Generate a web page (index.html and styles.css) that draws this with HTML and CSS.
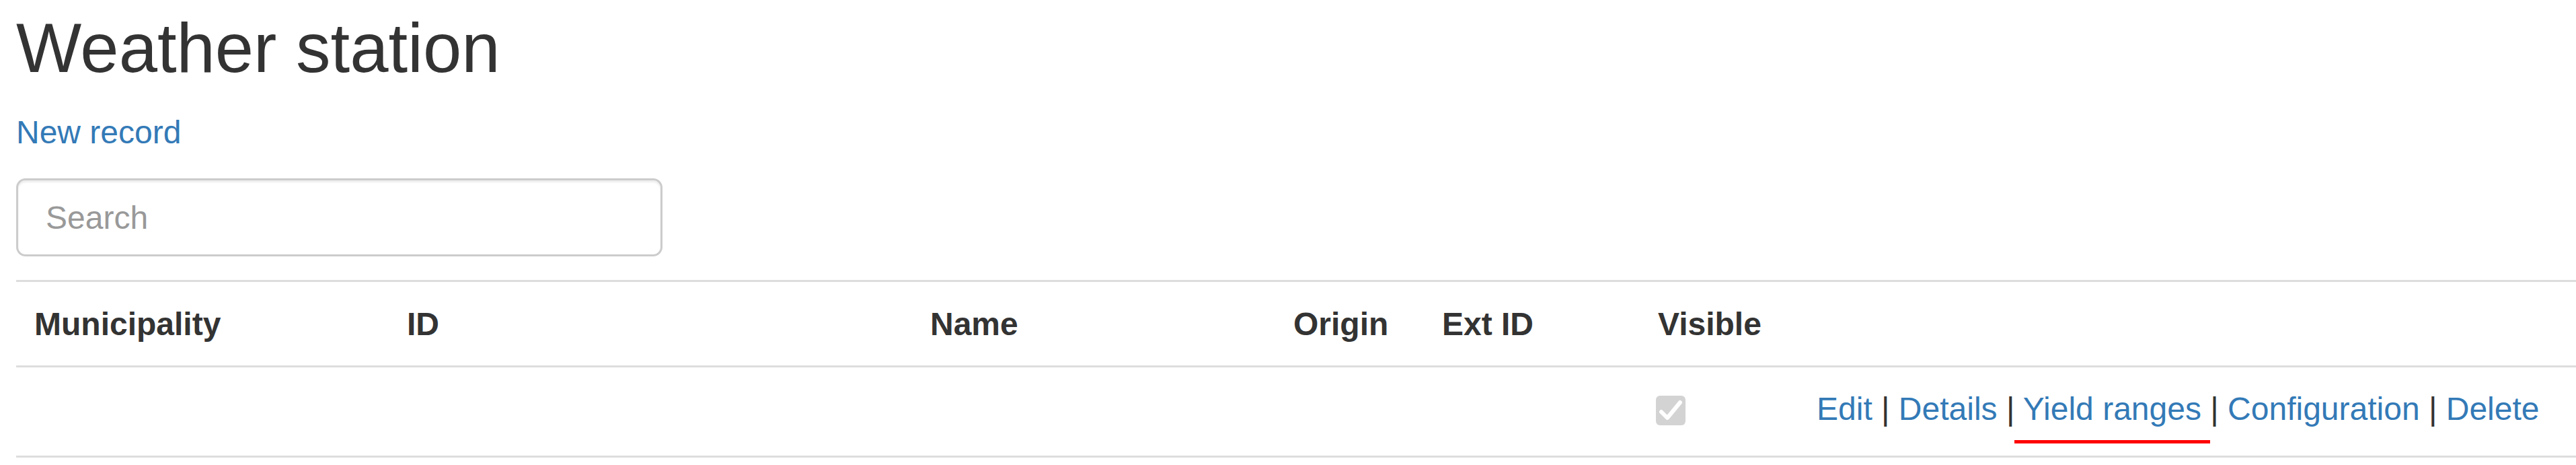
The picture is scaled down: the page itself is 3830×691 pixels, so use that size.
FILE: index.html
```html
<!DOCTYPE html>
<html lang="en">
<head>
<meta charset="utf-8">
<title>Weather station</title>
<link rel="stylesheet" href="styles.css">
</head>
<body>
<main class="page">
  <h1 class="title">Weather station</h1>
  <p class="actions"><a href="#" class="link">New record</a></p>
  <div class="search-group">
    <input class="search" type="text" placeholder="Search">
  </div>
  <table class="grid">
    <colgroup>
      <col class="c-mun">
      <col class="c-id">
      <col class="c-name">
      <col class="c-origin">
      <col class="c-ext">
      <col class="c-vis">
      <col class="c-act">
    </colgroup>
    <thead>
      <tr>
        <th>Municipality</th>
        <th>ID</th>
        <th>Name</th>
        <th>Origin</th>
        <th>Ext ID</th>
        <th>Visible</th>
        <th></th>
      </tr>
    </thead>
    <tbody>
      <tr>
        <td></td>
        <td></td>
        <td></td>
        <td></td>
        <td></td>
        <td>
          <span class="check" role="checkbox" aria-checked="true" aria-disabled="true">
            <svg viewBox="0 0 44 44" width="44" height="44"><polyline points="8,24 17,33 36,10" fill="none" stroke="#fff" stroke-width="6" stroke-linecap="round" stroke-linejoin="round"/></svg>
          </span>
        </td>
        <td class="links"><a href="#" class="link">Edit</a> | <a href="#" class="link">Details</a> |<span class="marked"> <a href="#" class="link">Yield ranges</a> </span>| <a href="#" class="link">Configuration</a> | <a href="#" class="link">Delete</a></td>
      </tr>
    </tbody>
  </table>
</main>
</body>
</html>
```

FILE: styles.css
```css
html, body {
  margin: 0;
  padding: 0;
  background: #fff;
}

body {
  font-family: "Liberation Sans", Arial, sans-serif;
  font-size: 48px;
  line-height: 69px;
  color: #333;
}

.page {
  padding: 15px 0 0 24px;
}

.title {
  margin: 0 0 34px;
  font-size: 103px;
  line-height: 113px;
  font-weight: 400;
  color: #333;
}

.actions {
  margin: 0 0 34px;
}

.link {
  color: #337ab7;
  text-decoration: none;
}

.search-group {
  margin-bottom: 35px;
}

.search {
  display: block;
  box-sizing: border-box;
  width: 961px;
  height: 116px;
  margin: 0;
  padding: 0 41px;
  border: 3px solid #ccc;
  border-radius: 14px;
  box-shadow: inset 0 3px 3px rgba(0, 0, 0, 0.075);
  font-family: "Liberation Sans", Arial, sans-serif;
  font-size: 48px;
  color: #555;
  background: #fff;
  outline: none;
}

.search::placeholder {
  color: #999;
}

.grid {
  width: calc(100% - 0px);
  border-collapse: collapse;
  table-layout: fixed;
}

.c-mun { width: 554px; }
.c-id { width: 778px; }
.c-name { width: 540px; }
.c-origin { width: 221px; }
.c-ext { width: 321px; }
.c-vis { width: 236px; }
.c-act { width: auto; }

.grid th {
  text-align: left;
  font-weight: 700;
  vertical-align: top;
  padding: 28px 27px 27px;
  border-top: 3px solid #ddd;
  border-bottom: 3px solid #ddd;
  white-space: nowrap;
}

.grid td {
  vertical-align: top;
  padding: 27px 27px 35px;
  border-bottom: 3px solid #ddd;
  white-space: nowrap;
}

.check {
  display: block;
  width: 44px;
  height: 44px;
  margin: 15px 0 0 -3px;
  border-radius: 6px;
  background: #d3d3d3;
}

.check svg {
  display: block;
}

.marked {
  position: relative;
}

.marked::after {
  content: "";
  position: absolute;
  left: 0;
  right: 0;
  top: calc(100% + 20px);
  height: 5px;
  background: #f00;
}
```
